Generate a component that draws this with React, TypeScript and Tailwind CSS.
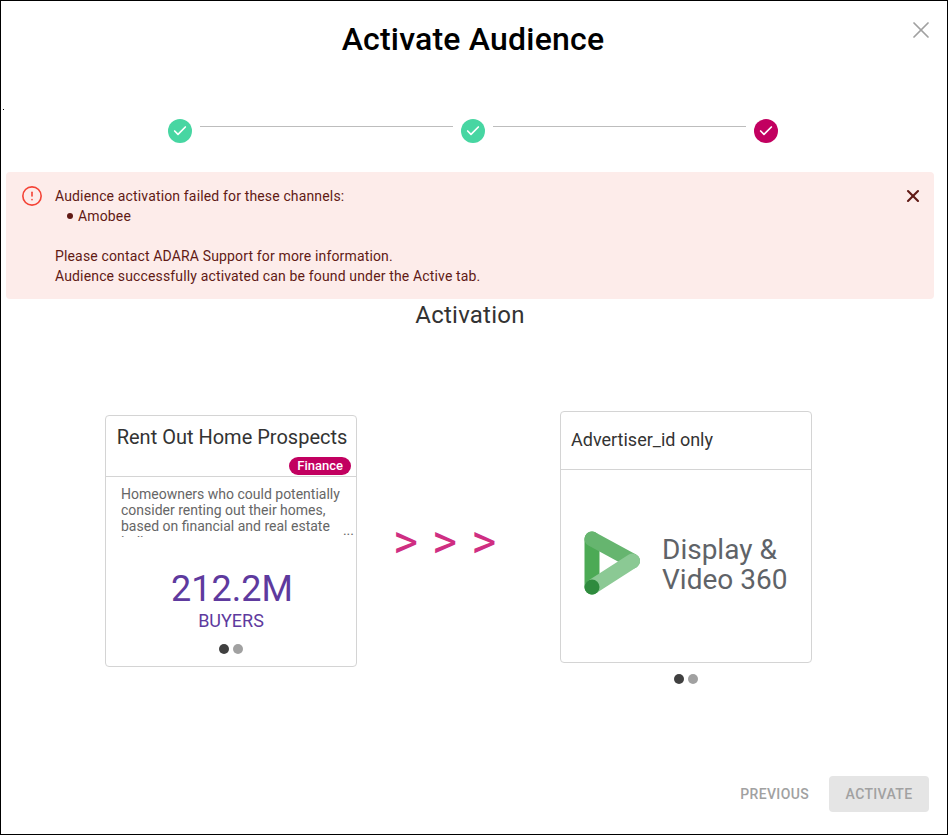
import { Check, CircleAlert, X } from "lucide-react";

const ROBOTO = { fontFamily: "Roboto, sans-serif" };

function StepDot({ color }: { color: string }) {
  return (
    <div className={`flex h-6 w-6 shrink-0 items-center justify-center rounded-full ${color}`}>
      <Check className="h-4 w-4 text-white" strokeWidth={2.5} />
    </div>
  );
}

function Dots() {
  return (
    <div className="flex justify-center gap-1">
      <span className="h-2.5 w-2.5 rounded-full bg-neutral-700" />
      <span className="h-2.5 w-2.5 rounded-full bg-neutral-400" />
    </div>
  );
}

function DisplayVideoLogo() {
  return (
    <div className="flex items-center gap-5">
      <svg width="58" height="64" viewBox="0 0 58 64" fill="none" strokeLinecap="round">
        <path d="M8 8 L8 56" stroke="#4caa55" strokeWidth="15" />
        <path d="M8 8 L48.5 30" stroke="#66b56f" strokeWidth="15" />
        <path d="M48.5 30 L8 56" stroke="#8bc994" strokeWidth="15" />
        <circle cx="8" cy="56" r="7.5" fill="#2f8b3e" />
      </svg>
      <div className="pt-1 text-[28px] leading-7.5 text-[#5f6368]">
        Display &amp;
        <br />
        Video 360
      </div>
    </div>
  );
}

export default function App() {
  return (
    <div style={ROBOTO} className="relative flex h-screen w-screen flex-col overflow-hidden border border-black bg-white">
      <span className="absolute left-0.5 top-27 h-px w-px bg-black" />
      <button type="button" className="absolute right-3 top-3.75 text-neutral-400">
        <X className="h-7 w-7" strokeWidth={1.5} />
      </button>

      <h1 className="mr-0.5 pt-4.5 text-center text-[32px] font-medium leading-10 tracking-[0.2px] text-black">Activate Audience</h1>

      <div className="ml-[167px] mt-15 flex w-[610px] gap-2">
        <StepDot color="bg-[#47d6a2]" />
        <div className="mt-1.75 h-px flex-1 bg-[#bdbdbd]" />
        <StepDot color="bg-[#47d6a2]" />
        <div className="mt-1.75 h-px flex-1 bg-[#bdbdbd]" />
        <StepDot color="bg-[#c20060]" />
      </div>

      <div className="ml-1.25 mr-3.25 mt-7.25 flex rounded bg-[#fdecea] pb-3.25 pl-3.75 pr-2.75 pt-3.5 text-sm leading-5 tracking-[0.15px] text-[#611a15]">
        <CircleAlert className="-mt-px mr-3 h-[22px] w-[22px] shrink-0 text-[#f44336]" strokeWidth={1.75} />
        <div className="flex-1">
          <p>Audience activation failed for these channels:</p>
          <p className="flex items-center gap-1.25 pl-3">
            <span className="h-1.5 w-1.5 rounded-full bg-[#611a15]" />
            Amobee
          </p>
          <p className="mt-5">Please contact ADARA Support for more information.</p>
          <p>Audience successfully activated can be found under the Active tab.</p>
        </div>
        <X className="h-5 w-5 text-[#611a15]" strokeWidth={2.5} />
      </div>

      <h2 className="mr-2 mt-0.5 text-center text-2xl leading-7 tracking-[0.01em] text-[#333]">Activation</h2>

      <div className="mt-[82px] flex flex-1 items-start pl-[104px]">
        <div className="mt-1 flex h-[252px] w-[252px] flex-col rounded border border-neutral-300">
          <div className="h-[61px] shrink-0 border-b border-neutral-300">
            <p className="pl-0.5 pt-1.75 text-center text-xl leading-7 text-[#333]">Rent Out Home Prospects</p>
            <div className="mt-1.5 flex justify-end pr-1.25">
              <span className="rounded-full bg-[#c20060] px-2 text-[13px] font-medium leading-[18px] text-white">Finance</span>
            </div>
          </div>
          <div className="relative mt-2.25 h-12.75 overflow-hidden pl-[15px] pr-4 text-sm leading-4 text-[#666]">
            Homeowners who could potentially consider renting out their homes, based on financial and real estate indicators
            <span className="absolute bottom-0.25 right-0.5 bg-white pl-1 leading-3">...</span>
          </div>
          <p className="mt-auto pl-0.5 text-center text-4xl leading-10 text-[#5e3a9e]">212.2M</p>
          <p className="text-center text-lg leading-6 text-[#5e3a9e]">BUYERS</p>
          <div className="mb-3 mt-2.75">
            <Dots />
          </div>
        </div>

        <div className="mt-[107px] flex w-[203px] gap-3.5 pl-9 text-5xl leading-12 text-[#cf2e82]">
          <span>&gt;</span>
          <span>&gt;</span>
          <span>&gt;</span>
        </div>

        <div className="flex w-[252px] flex-col gap-2.75">
          <div className="flex h-[252px] flex-col rounded border border-neutral-300">
            <div className="flex h-[58px] items-center border-b border-neutral-300 px-2.5 pb-0.5 text-lg text-[#333]">
              Advertiser_id only
            </div>
            <div className="flex flex-1 items-center pb-1.5 pl-[23px]">
              <DisplayVideoLogo />
            </div>
          </div>
          <Dots />
        </div>
      </div>

      <div className="flex items-center justify-end gap-5 pb-[22px] pr-[18px] text-sm font-medium tracking-wide text-neutral-400">
        <span>PREVIOUS</span>
        <span className="flex h-9 w-[100px] items-center justify-center rounded bg-neutral-200">ACTIVATE</span>
      </div>
    </div>
  );
}
